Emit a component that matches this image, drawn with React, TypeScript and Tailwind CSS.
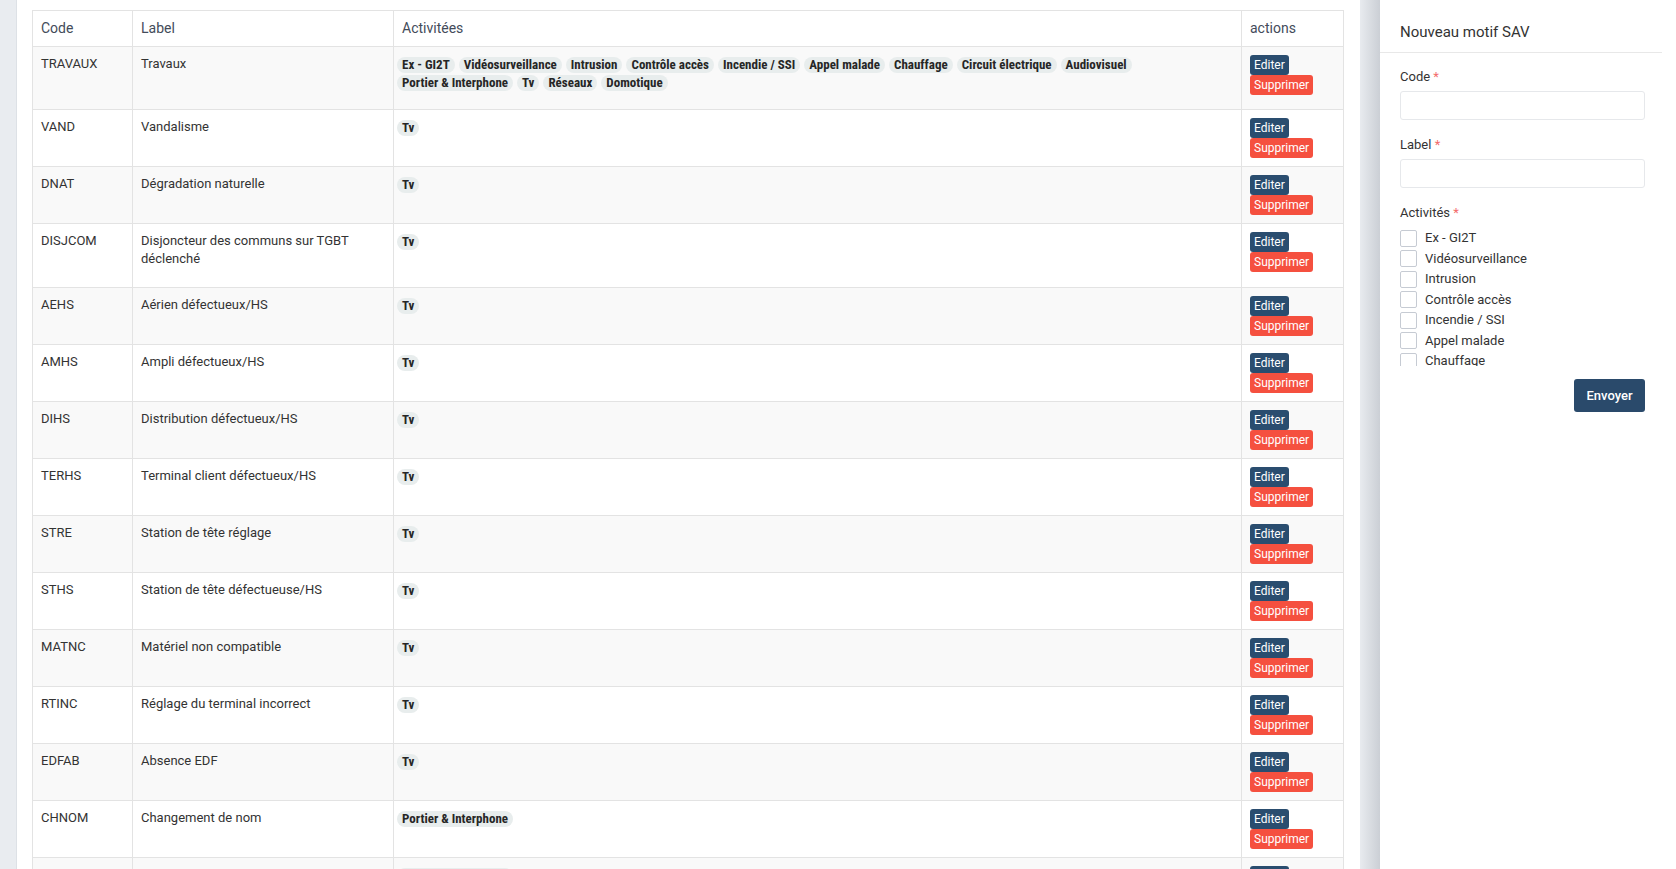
import React from "react";

const activities = [
  "Ex - GI2T",
  "Vidéosurveillance",
  "Intrusion",
  "Contrôle accès",
  "Incendie / SSI",
  "Appel malade",
  "Chauffage",
  "Circuit électrique",
  "Audiovisuel",
  "Portier & Interphone",
  "Tv",
  "Réseaux",
  "Domotique",
];

const rows = [
  { code: "TRAVAUX", label: "Travaux", acts: activities },
  { code: "VAND", label: "Vandalisme", acts: ["Tv"] },
  { code: "DNAT", label: "Dégradation naturelle", acts: ["Tv"] },
  { code: "DISJCOM", label: "Disjoncteur des communs sur TGBT déclenché", acts: ["Tv"] },
  { code: "AEHS", label: "Aérien défectueux/HS", acts: ["Tv"] },
  { code: "AMHS", label: "Ampli défectueux/HS", acts: ["Tv"] },
  { code: "DIHS", label: "Distribution défectueux/HS", acts: ["Tv"] },
  { code: "TERHS", label: "Terminal client défectueux/HS", acts: ["Tv"] },
  { code: "STRE", label: "Station de tête réglage", acts: ["Tv"] },
  { code: "STHS", label: "Station de tête défectueuse/HS", acts: ["Tv"] },
  { code: "MATNC", label: "Matériel non compatible", acts: ["Tv"] },
  { code: "RTINC", label: "Réglage du terminal incorrect", acts: ["Tv"] },
  { code: "EDFAB", label: "Absence EDF", acts: ["Tv"] },
  { code: "CHNOM", label: "Changement de nom", acts: ["Portier & Interphone"] },
  { code: "CHADR", label: "Changement d'adresse", acts: ["Portier & Interphone"] },
];

function Badge({ children }: { children: React.ReactNode }) {
  return (
    <span className="inline-block h-4 rounded-full bg-[#e8eded] px-[5px] text-[13px] font-bold leading-4 text-[#262626] [font-stretch:80%]">
      {children}
    </span>
  );
}

function Required({ children }: { children: React.ReactNode }) {
  return (
    <div className="text-[13px] leading-[17px] text-[#333]">
      {children} <span className="text-[#f36b6b]">*</span>
    </div>
  );
}

export default function App() {
  return (
    <div className="flex h-[869px] overflow-hidden bg-white font-['Roboto','Liberation_Sans',sans-serif] text-[#333]">
      <div className="w-[17px] shrink-0 border-r border-[#dde1e6] bg-[#e9ecf0]" />

      <main className="w-[1343px] shrink-0 pl-[15px] pr-[17px] pt-[10px]">
        <table className="w-[1311px] table-fixed border-collapse border border-[#e3e3e3] text-[13px]">
          <colgroup>
            <col className="w-[100px]" />
            <col className="w-[261px]" />
            <col className="w-[848px]" />
            <col className="w-[102px]" />
          </colgroup>
          <thead>
            <tr className="h-[36px] text-left text-[14px] text-[#434b5a]">
              <th className="border border-[#e3e3e3] px-2 font-normal">Code</th>
              <th className="border border-[#e3e3e3] px-2 font-normal">Label</th>
              <th className="border border-[#e3e3e3] px-2 font-normal">Activitées</th>
              <th className="border border-[#e3e3e3] px-2 font-normal">actions</th>
            </tr>
          </thead>
          <tbody>
            {rows.map((r, i) => (
              <tr key={r.code} className={i % 2 === 0 ? "bg-[#f9f9f9]" : "bg-white"}>
                <td className="border border-[#e3e3e3] px-2 pt-2 align-top leading-[18px]">{r.code}</td>
                <td className="border border-[#e3e3e3] px-2 pt-2 align-top">
                  <div className="mb-[19px] leading-[18px]">{r.label}</div>
                </td>
                <td className="border border-[#e3e3e3] pl-[3px] pr-2 pt-[10px] align-top">
                  <div className="mb-[18px] flex flex-wrap gap-x-1 gap-y-[2px]">
                    {r.acts.map((a) => (
                      <Badge key={a}>{a}</Badge>
                    ))}
                  </div>
                </td>
                <td className="border border-[#e3e3e3] px-2 py-2 align-top">
                  <button className="block h-5 rounded-[3px] bg-[#2a4d6f] px-1 text-[12px] leading-5 text-white">
                    Editer
                  </button>
                  <button className="block h-5 rounded-[3px] bg-[#f5503f] px-1 text-[12px] leading-5 text-white">
                    Supprimer
                  </button>
                </td>
              </tr>
            ))}
          </tbody>
        </table>
      </main>

      <div className="w-5 shrink-0 bg-gradient-to-r from-[#e8ebef] to-[#cbcfd5]" />

      <aside className="flex-1 bg-white">
        <div className="w-[282px]">
          <div className="h-[53px] border-b border-[#e8e8e8] pl-[20px] pt-[22px] text-[15px] leading-5 text-[#333]">
            Nouveau motif SAV
          </div>
          <form className="pl-[20px] pr-[17px] pt-[15px]">
            <Required>Code</Required>
            <input className="mt-[6px] block h-[29px] w-full rounded-[3px] border border-[#e6e8eb]" />
            <div className="mt-[16px]">
              <Required>Label</Required>
            </div>
            <input className="mt-[6px] block h-[29px] w-full rounded-[3px] border border-[#e6e8eb]" />
            <div className="mt-[16px]">
              <Required>Activités</Required>
            </div>
            <div className="mt-[8px] h-[137px] overflow-hidden">
              <div className="flex flex-col gap-[4.5px] pt-[1px]">
                {activities.map((a) => (
                  <label key={a} className="flex h-4 items-center gap-2 text-[13px] text-[#333]">
                    <span className="block h-[17px] w-[17px] shrink-0 rounded-[2px] border border-[#c6cbd3] bg-white" />
                    {a}
                  </label>
                ))}
              </div>
            </div>
            <div className="mt-[13px] flex justify-end">
              <button
                type="button"
                className="h-[33px] w-[71px] rounded-[3px] bg-[#2a4a6b] text-[13px] font-medium text-white"
              >
                Envoyer
              </button>
            </div>
          </form>
        </div>
      </aside>
    </div>
  );
}
